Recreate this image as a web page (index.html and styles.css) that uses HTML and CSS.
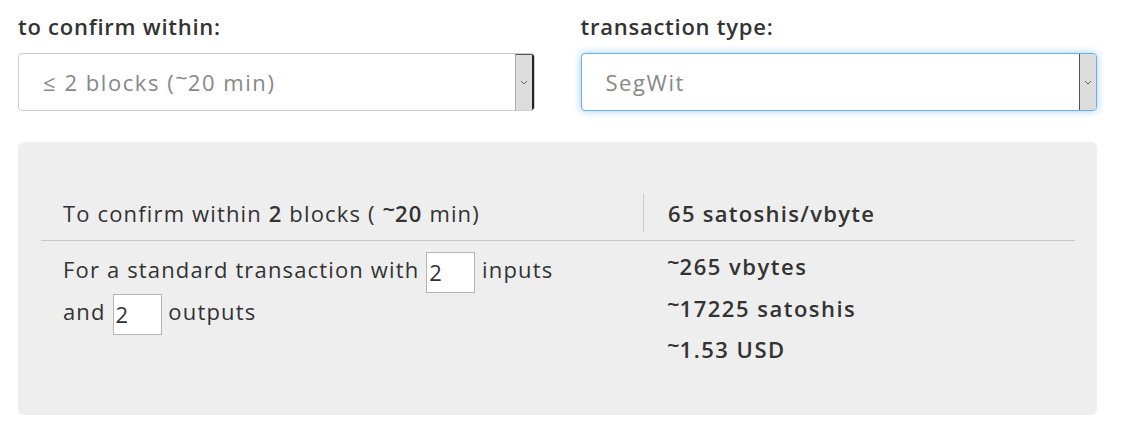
FILE: index.html
```html
<!DOCTYPE html>
<html>
<head>
<meta charset="utf-8">
<link rel="stylesheet" href="styles.css">
</head>
<body>
<div class="page">
  <div class="fields">
    <div class="field">
      <div class="label">to confirm within:</div>
      <div class="select">
        <span class="select-text">≤ 2 blocks (<span class="t">~</span>20 min)</span>
        <span class="arrow arrow-left"><svg width="8" height="5" viewBox="0 0 8 5"><path d="M1 1 L4 4 L7 1" fill="none" stroke="#666" stroke-width="1"/></svg></span>
      </div>
    </div>
    <div class="field">
      <div class="label">transaction type:</div>
      <div class="select focused">
        <span class="select-text">SegWit</span>
        <span class="arrow arrow-right"><svg width="8" height="5" viewBox="0 0 8 5"><path d="M1 1 L4 4 L7 1" fill="none" stroke="#666" stroke-width="1"/></svg></span>
      </div>
    </div>
  </div>
  <div class="panel">
    <div class="row head">
      <div class="col-main">To confirm within <b>2</b> blocks ( <b><span class="t">~</span>20</b> min)</div>
      <div class="col-side divided"><b>65 satoshis/vbyte</b></div>
    </div>
    <div class="row body">
      <div class="col-main">
        <div class="line">For a standard transaction with <input class="num" value="2"> inputs</div>
        <div class="line">and <input class="num" value="2"> outputs</div>
      </div>
      <div class="col-side values">
        <div class="line2"><b><span class="t">~</span>265 vbytes</b></div>
        <div class="line2"><b><span class="t">~</span>17225 satoshis</b></div>
        <div class="line2"><b><span class="t">~</span>1.53 USD</b></div>
      </div>
    </div>
  </div>
</div>
</body>
</html>
```
FILE: styles.css
```css
html, body {
  margin: 0;
  padding: 0;
  background: #fff;
}
body {
  font-family: "Open Sans", Lato, sans-serif;
  color: #333;
  font-size: 22px;
  letter-spacing: 1.15px;
}
.page {
  width: 1079px;
  padding: 13px 0 0 18px;
}
.fields {
  display: flex;
  gap: 46px;
}
.field {
  flex: 1;
}
.label {
  font-weight: 600;
  font-size: 22px;
  line-height: 26px;
  height: 26px;
  margin-bottom: 14px;
  letter-spacing: 0.75px;
}
.select {
  box-sizing: border-box;
  height: 58px;
  border: 1px solid #ccc;
  border-radius: 4px;
  background: #fff;
  display: flex;
  align-items: stretch;
  overflow: hidden;
}
.select.focused {
  border-color: #66afe9;
  box-shadow: 0 0 8px rgba(102, 175, 233, 0.6);
}
.select-text {
  flex: 1;
  display: flex;
  align-items: center;
  padding-left: 24px;
  color: #888;
  font-size: 22px;
  letter-spacing: 1.55px;
  white-space: pre;
}
.t {
  display: inline-block;
  transform: translateY(-0.22em);
  letter-spacing: 0;
}
.arrow {
  width: 16px;
  background: #ddd;
  display: flex;
  align-items: center;
  justify-content: center;
  border-left: 1px solid #aaa;
}
.arrow-left {
  border-top: 1px solid #555;
  border-right: 2px solid #222;
}
.arrow-right {
  border-left: 1px solid #555;
}
.panel {
  margin-top: 31px;
  background: #eee;
  border-radius: 6px;
  padding: 52px 22px 43px 23px;
  height: 273px;
  box-sizing: border-box;
}
.row {
  display: flex;
}
.row.head {
  padding-bottom: 8px;
  border-bottom: 1px solid #c8c8c8;
}
.row.head .col-main,
.row.head .col-side {
  height: 38px;
  line-height: 38px;
}
b {
  font-weight: 600;
}
.col-main {
  width: 602px;
  padding-left: 22px;
  box-sizing: border-box;
}
.col-side {
  flex: 1;
  padding-left: 24px;
  letter-spacing: 1.3px;
}
.values {
  letter-spacing: 1.5px;
}
.divided {
  border-left: 1px solid #ccc;
}
.row.body .col-main {
  padding-top: 7px;
}
.row.body .col-side {
  padding-top: 5px;
}
.line {
  height: 42px;
  line-height: 42px;
}
.line2 {
  height: 41.5px;
  line-height: 41.5px;
}
.num {
  box-sizing: border-box;
  width: 49px;
  height: 41px;
  border: 1px solid #b5b5b5;
  background: #fff;
  font-family: inherit;
  font-size: 22px;
  color: #333;
  padding: 0 2px;
  margin: 0;
  vertical-align: middle;
  letter-spacing: 0;
}
```
